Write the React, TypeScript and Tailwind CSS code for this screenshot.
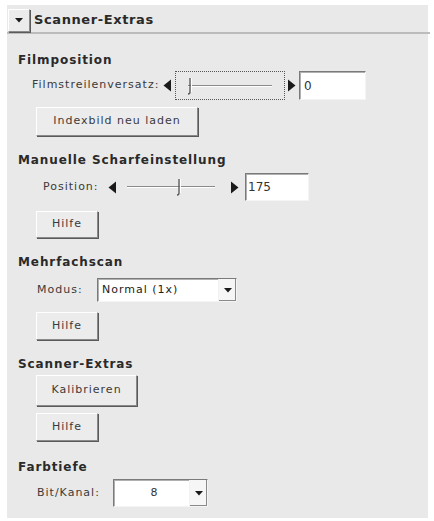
const raised = 'border border-t-white border-l-white border-b-[#8a8a8a] border-r-[#8a8a8a] shadow-[1px_1px_0_#5a5a5a] bg-[#ececec]';
const sunken = 'border border-t-[#7a7a7a] border-l-[#7a7a7a] border-b-[#f4f4f4] border-r-[#f4f4f4] shadow-[inset_1px_1px_0_#b0b0b0] bg-white';

const Heading = ({ children, className = '' }: { children: string; className?: string }) => (
  <div className={`h-4 flex items-center pl-[11px] text-[12px] font-bold tracking-[0.9px] text-[#2a2a2a] ${className}`}>{children}</div>
);

const Button = ({ label, width, height, className = '' }: { label: string; width: number; height: number; className?: string }) => (
  <div className={`ml-[29px] ${className}`}>
    <button
      className={`${raised} flex items-center justify-center text-[11px] tracking-[1px] text-[#3a3a3a]`}
      style={{ width, height }}
    >
      {label}
    </button>
  </div>
);

const ArrowLeft = () => (
  <svg width="9" height="13" viewBox="0 0 9 13" className="shrink-0">
    <path d="M8 0.5 L8 12.5 L0.5 6.5 Z" fill="#1a1a1a" />
  </svg>
);

const ArrowRight = () => (
  <svg width="9" height="13" viewBox="0 0 9 13" className="shrink-0">
    <path d="M1 0.5 L1 12.5 L8.5 6.5 Z" fill="#1a1a1a" />
  </svg>
);

const Track = ({ width, thumb }: { width: number; thumb: number }) => (
  <svg width={width} height="22" viewBox={`0 0 ${width} 22`}>
    <line x1="2" y1="10.5" x2={width - 2} y2="10.5" stroke="#8a8a8a" strokeWidth="1" />
    <line x1="2" y1="11.5" x2={width - 2} y2="11.5" stroke="#ffffff" strokeWidth="1" />
    <path d={`M${thumb} 3 L${thumb} 17 Q${thumb} 19 ${thumb - 2} 19`} stroke="#555" strokeWidth="1.3" fill="none" />
    <line x1={thumb + 1.5} y1="3" x2={thumb + 1.5} y2="17" stroke="#fff" strokeWidth="1" />
  </svg>
);

const DropArrow = () => (
  <div className="w-[18px] h-full flex items-center justify-center border-l border-l-[#f2f2f2] bg-[#f6f6f6] shadow-[inset_-1px_-1px_0_#8a8a8a]">
    <svg width="8" height="5" viewBox="0 0 8 5">
      <path d="M0 0 L8 0 L4 4.5 Z" fill="#1a1a1a" />
    </svg>
  </div>
);

export default function App() {
  return (
    <div className="w-[434px] h-[521px] bg-white pt-[5px] pl-[7px]" style={{ fontFamily: '"DejaVu Sans", Verdana, sans-serif' }}>
      <div className="w-[421px] h-[513px] bg-[#e9e9e9] flex flex-col">
        {/* header */}
        <div className="h-[29px] flex items-center border-b-2 border-[#bcbcbc] w-[423px]">
          <div className={`${raised} w-[22px] h-[23px] ml-[1px] mt-[4px] flex items-center justify-center`}>
            <svg width="8" height="5" viewBox="0 0 8 5">
              <path d="M0 0 L8 0 L4 4.5 Z" fill="#1a1a1a" />
            </svg>
          </div>
          <span className="ml-[4px] mt-[3px] text-[13px] font-bold text-[#2a2a2a] tracking-[0.6px]">Scanner-Extras</span>
        </div>

        <Heading className="mt-[18px]">Filmposition</Heading>
        <div className="mt-[3px] h-[29px] flex items-center pl-[25px] text-[11px] tracking-[1px] text-[#3a3a3a]">
          <span className="w-[131px]">Filmstreilenversatz:</span>
          <ArrowLeft />
          <div className="ml-[3px] w-[110px] h-[29px] border border-dotted border-[#555] flex items-center pl-[10px]">
            <Track width={88} thumb={4} />
          </div>
          <span className="ml-[2px]"><ArrowRight /></span>
          <div className={`${sunken} ml-[3px] w-[67px] h-[29px] flex items-center pl-[4px] text-[12px] text-[#333]`}>0</div>
        </div>
        <Button label="Indexbild neu laden" width={162} height={29} className="mt-[7px]" />

        <Heading className="mt-[16px]">Manuelle Scharfeinstellung</Heading>
        <div className="mt-[5px] h-[28px] flex items-center pl-[36px] text-[11px] tracking-[1px] text-[#3a3a3a]">
          <span className="w-[65px]">Position:</span>
          <ArrowLeft />
          <div className="ml-[8px] w-[94px] flex items-center">
            <Track width={92} thumb={54} />
          </div>
          <span className="ml-[11px]"><ArrowRight /></span>
          <div className={`${sunken} ml-[6px] w-[64px] h-[28px] flex items-center pl-[2px] text-[12px] tracking-normal text-[#333]`}>175</div>
        </div>
        <Button label="Hilfe" width={62} height={27} className="mt-[10px]" />

        <Heading className="mt-[16px]">Mehrfachscan</Heading>
        <div className="mt-[8px] h-[24px] flex items-center pl-[30px] text-[11px] tracking-[1px] text-[#3a3a3a]">
          <span className="w-[60px]">Modus:</span>
          <div className={`${sunken} w-[140px] h-[24px] flex items-center justify-between`}>
            <span className="pl-[4px] text-[#222]">Normal (1x)</span>
            <DropArrow />
          </div>
        </div>
        <Button label="Hilfe" width={62} height={28} className="mt-[10px]" />

        <Heading className="mt-[16px]">Scanner-Extras</Heading>
        <Button label="Kalibrieren" width={101} height={31} className="mt-[3px]" />
        <Button label="Hilfe" width={62} height={28} className="mt-[7px]" />

        <Heading className="mt-[18px]">Farbtiefe</Heading>
        <div className="mt-[4px] h-[28px] flex items-center pl-[30px] text-[11px] tracking-[1px] text-[#3a3a3a]">
          <span className="w-[76px]">Bit/Kanal:</span>
          <div className={`${sunken} w-[95px] h-[28px] flex items-center justify-between`}>
            <span className="flex-1 text-center text-[#333] pl-[6px]">8</span>
            <DropArrow />
          </div>
        </div>
      </div>
    </div>
  );
}
